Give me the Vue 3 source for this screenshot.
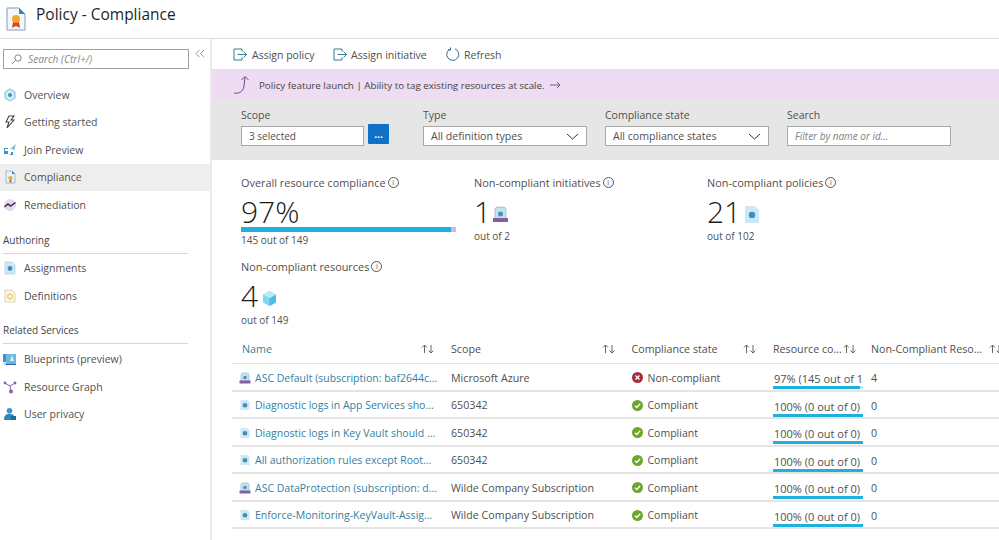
<script setup>
const nav1 = [
  { label: 'Overview', icon: 'overview' },
  { label: 'Getting started', icon: 'bolt' },
  { label: 'Join Preview', icon: 'join' },
  { label: 'Compliance', icon: 'compliance', active: true },
  { label: 'Remediation', icon: 'remed' },
]
const nav2 = [
  { label: 'Assignments', icon: 'assign' },
  { label: 'Definitions', icon: 'defin' },
]
const nav3 = [
  { label: 'Blueprints (preview)', icon: 'blue' },
  { label: 'Resource Graph', icon: 'graph' },
  { label: 'User privacy', icon: 'user' },
]
const groups = [
  { title: '', items: nav1 },
  { title: 'Authoring', items: nav2 },
  { title: 'Related Services', items: nav3 },
]
const rows = [
  { name: 'ASC Default (subscription: baf2644c...', kind: 'init', scope: 'Microsoft Azure', ok: false, res: '97% (145 out of 149)', pct: 97, n: 4 },
  { name: 'Diagnostic logs in App Services sho...', kind: 'pol', scope: '650342', ok: true, res: '100% (0 out of 0)', pct: 100, n: 0 },
  { name: 'Diagnostic logs in Key Vault should ...', kind: 'pol', scope: '650342', ok: true, res: '100% (0 out of 0)', pct: 100, n: 0 },
  { name: 'All authorization rules except Root...', kind: 'pol', scope: '650342', ok: true, res: '100% (0 out of 0)', pct: 100, n: 0 },
  { name: 'ASC DataProtection (subscription: d...', kind: 'init', scope: 'Wilde Company Subscription', ok: true, res: '100% (0 out of 0)', pct: 100, n: 0 },
  { name: 'Enforce-Monitoring-KeyVault-Assig...', kind: 'pol', scope: 'Wilde Company Subscription', ok: true, res: '100% (0 out of 0)', pct: 100, n: 0 },
]
const heads = ['Name', 'Scope', 'Compliance state', 'Resource co...', 'Non-Compliant Reso...']
</script>

<template>
  <div class="page">
    <header class="head">
      <svg class="logo" width="20" height="24" viewBox="0 0 20 24">
        <path d="M1 1h12l6 6v16H1z" fill="#f4f8fb" stroke="#7f9db5" stroke-width="1" />
        <path d="M13 1l6 6h-6z" fill="#2f86c8" />
        <path d="M7 15l-1 6 4-2 4 2-1-6z" fill="#d8452c" />
        <circle cx="10" cy="12" r="4" fill="#f0a92d" />
      </svg>
      <h1 class="title">Policy - Compliance</h1>
    </header>
    <div class="body">
      <aside class="side">
        <div class="searchrow">
          <div class="sbox">
            <svg width="11" height="11" viewBox="0 0 11 11" fill="none" stroke="#777" stroke-width="0.9">
              <circle cx="7" cy="4" r="3.2" /><path d="M4.7 6.3L1 10" />
            </svg>
            <span>Search (Ctrl+/)</span>
          </div>
          <svg class="coll" width="10" height="9" viewBox="0 0 10 9" fill="none" stroke="#8a8a8a" stroke-width="0.9">
            <path d="M4.5 1L1 4.5 4.5 8M9 1L5.5 4.5 9 8" />
          </svg>
        </div>
        <section v-for="g in groups" :key="g.title" class="group">
          <div v-if="g.title" class="gtitle">{{ g.title }}</div>
          <div v-for="it in g.items" :key="it.label" class="nav" :class="{ on: it.active }">
            <svg class="nicon" width="14" height="14" viewBox="0 0 14 14">
              <template v-if="it.icon === 'overview'">
                <path d="M7 1l5 3v6l-5 3-5-3V4z" fill="#d3eef5" stroke="#79bcd0" stroke-width="1" />
                <circle cx="7" cy="7" r="2" fill="#3b93b8" />
              </template>
              <path v-else-if="it.icon === 'bolt'" d="M6 1h5L8 5h3l-7 8 2-6H3z" fill="none" stroke="#444" stroke-width="1.1" />
              <template v-else-if="it.icon === 'join'">
                <path d="M1 5h4v1H2v2h3v3H1z" fill="#3f92c4" />
                <path d="M7 6l6-5-2 7-1-2z" fill="#7fb9dc" />
                <path d="M8 9h2v3H7v-1h1z" fill="#3f92c4" />
              </template>
              <template v-else-if="it.icon === 'compliance'">
                <path d="M3 1h6l3 3v9H3z" fill="#e6f3fa" stroke="#7fb0d0" stroke-width="0.8" />
                <path d="M9 1l3 3H9z" fill="#2f86c8" />
                <circle cx="7.5" cy="8" r="2.1" fill="#eda72e" />
                <path d="M6.5 10h2v2.4h-2z" fill="#d8552c" />
              </template>
              <template v-else-if="it.icon === 'remed'">
                <circle cx="7" cy="7" r="6" fill="#e6d9ee" />
                <path d="M1.5 9l3.5-3 2.5 2 5-3.5" fill="none" stroke="#3a2a4a" stroke-width="1.5" />
              </template>
              <template v-else-if="it.icon === 'assign'">
                <path d="M2 1h7l3 3v9H2z" fill="#cfe8f5" stroke="#a8d2e6" stroke-width="0.7" />
                <circle cx="7" cy="7.5" r="2.4" fill="#3b8fbf" />
              </template>
              <template v-else-if="it.icon === 'defin'">
                <path d="M2 1h7l3 3v9H2z" fill="#fbf5dd" stroke="#d6cda6" stroke-width="0.8" />
                <circle cx="7" cy="7.5" r="2.4" fill="none" stroke="#e0b95a" stroke-width="1" />
              </template>
              <template v-else-if="it.icon === 'blue'">
                <path d="M0 2h3v8H0z" fill="#3b93c8" />
                <path d="M3 2h10v10H3z" fill="#6fb7e0" />
                <path d="M9 3l2 6H7z" fill="#d8eefa" />
                <path d="M0 10l3 2h10v1H3z" fill="#2569a0" />
              </template>
              <template v-else-if="it.icon === 'graph'">
                <path d="M2 3l5 3 5-3M7 6l1 6" stroke="#8661b0" stroke-width="1" fill="none" />
                <circle cx="2" cy="3" r="1.4" fill="#8661b0" />
                <circle cx="12" cy="3" r="1.4" fill="#8661b0" />
                <circle cx="8" cy="11.5" r="2" fill="#8661b0" />
              </template>
              <template v-else>
                <circle cx="6.5" cy="3.8" r="2.8" fill="#3f97c5" />
                <path d="M1 13c0-5 2-6 5.500-6s5.500 1 6 6z" fill="#2f86b8" />
                <rect x="8" y="9" width="5" height="4" fill="#1e6a96" />
              </template>
            </svg>
            <span>{{ it.label }}</span>
          </div>
        </section>
      </aside>
      <main class="main">
        <div class="toolbar">
          <div class="tool t1">
            <svg width="14" height="13" viewBox="0 0 14 13" fill="none" stroke="#2f7f8f" stroke-width="1">
              <path d="M9 3.500V1H1v11h8V9.500" /><path d="M4.500 6.500h9M10.500 3.500l3 3-3 3" />
            </svg>
            <span>Assign policy</span>
          </div>
          <div class="tool t2">
            <svg width="14" height="13" viewBox="0 0 14 13" fill="none" stroke="#2f7f8f" stroke-width="1">
              <path d="M9 3.500V1H1v11h8V9.500" /><path d="M4.500 6.500h9M10.500 3.500l3 3-3 3" />
            </svg>
            <span>Assign initiative</span>
          </div>
          <div class="tool t3">
            <svg width="15" height="15" viewBox="0 0 15 15" fill="none" stroke="#2f6f8f" stroke-width="1">
              <path d="M9 1.800a6 6 0 1 1-4.500 0" /><path d="M4.500 0.500v2.500H2" />
            </svg>
            <span>Refresh</span>
          </div>
        </div>
        <div class="banner">
          <svg width="18" height="20" viewBox="0 0 18 20" fill="none" stroke="#7a3f98" stroke-width="1">
            <path d="M1 18c5 1 9-1 10-7l1-9M8.500 5L12 1.500 15.500 5" />
          </svg>
          <span>Policy feature launch | Ability to tag existing resources at scale.</span>
          <svg width="11" height="8" viewBox="0 0 11 8" fill="none" stroke="#7a3f98" stroke-width="0.9"><path d="M0 4h10M7 1l3 3-3 3" /></svg>
        </div>
        <div class="filters">
          <div class="field f-scope">
            <label>Scope</label>
            <div class="scoperow">
              <div class="ctl scope">3 selected</div>
              <div class="dots">...</div>
            </div>
          </div>
          <div class="field f-sel">
            <label>Type</label>
            <div class="ctl sel">All definition types
              <svg width="13" height="7" viewBox="0 0 13 7" fill="none" stroke="#333" stroke-width="1"><path d="M1 1l5.500 5L12 1" /></svg>
            </div>
          </div>
          <div class="field f-sel">
            <label>Compliance state</label>
            <div class="ctl sel">All compliance states
              <svg width="13" height="7" viewBox="0 0 13 7" fill="none" stroke="#333" stroke-width="1"><path d="M1 1l5.500 5L12 1" /></svg>
            </div>
          </div>
          <div class="field f-sel">
            <label>Search</label>
            <div class="ctl ph">Filter by name or id...</div>
          </div>
        </div>
        <div class="stats">
          <div class="stat">
            <div class="slabel">Overall resource compliance<i class="info">i</i></div>
            <div class="big pct">97%</div>
            <div class="bar"><div class="barfill"></div></div>
            <div class="sub">145 out of 149</div>
          </div>
          <div class="stat">
            <div class="slabel">Non-compliant initiatives<i class="info">i</i></div>
            <div class="bigrow">
              <span class="big">1</span>
              <svg class="initicon" width="17" height="17" viewBox="0 0 17 17">
                <path d="M3 13V4q0-3 3-3h5q3 0 3 3v9z" fill="#c4e3f1" stroke="#8ab6d0" stroke-width="0.7" />
                <circle cx="8.500" cy="8" r="2.500" fill="#4d8fb8" />
                <path d="M1 12h15v4H1z" fill="#8a5aa5" />
              </svg>
            </div>
            <div class="sub">out of 2</div>
          </div>
          <div class="stat">
            <div class="slabel">Non-compliant policies<i class="info">i</i></div>
            <div class="bigrow">
              <span class="big">21</span>
              <svg width="14" height="17" viewBox="0 0 14 17">
                <path d="M0 0h10l4 4v13H0z" fill="#cde8f6" />
                <circle cx="7" cy="9" r="3.200" fill="#3d8fbe" />
              </svg>
            </div>
            <div class="sub">out of 102</div>
          </div>
          <div class="stat res">
            <div class="slabel">Non-compliant resources<i class="info">i</i></div>
            <div class="bigrow">
              <span class="big">4</span>
              <svg width="15" height="15" viewBox="0 0 15 15">
                <path d="M7.500 0L14 3.500v8L7.500 15 1 11.500v-8z" fill="#7fd6f0" />
                <path d="M7.500 7L14 3.500v8L7.500 15z" fill="#4fbde2" />
                <path d="M7.500 7L1 3.500 7.500 0 14 3.500z" fill="#b4ecfa" />
              </svg>
            </div>
            <div class="sub">out of 149</div>
          </div>
        </div>
        <div class="table">
          <div class="tr th">
            <div v-for="(h, i) in heads" :key="h" class="cell" :class="{ link: i === 0 }">
              <span class="hlabel">{{ h }}</span>
              <svg class="sort" width="14" height="10" viewBox="0 0 14 10" fill="none" stroke="#555" stroke-width="0.9">
                <path d="M3.500 9V1M1 3.500L3.500 1 6 3.500M10 1v8M7.500 6.500L10 9l2.500-2.500" />
              </svg>
            </div>
          </div>
          <div v-for="r in rows" :key="r.name" class="tr">
            <div class="cell link namecell">
              <svg v-if="r.kind === 'init'" width="12" height="12" viewBox="0 0 12 12">
                <path d="M2 9V3q0-2 2-2h4q2 0 2 2v6z" fill="#c4e3f1" stroke="#8ab6d0" stroke-width="0.6" />
                <circle cx="6" cy="5.500" r="1.800" fill="#4d8fb8" />
                <path d="M0.500 8.500h11V11.500h-11z" fill="#8a5aa5" />
              </svg>
              <svg v-else width="12" height="12" viewBox="0 0 12 12">
                <path d="M1.500 1h7l2 2v8h-9z" fill="#cde8f6" />
                <circle cx="6" cy="6.300" r="2.300" fill="#3d8fbe" />
              </svg>
              <span class="nm">{{ r.name }}</span>
            </div>
            <div class="cell">{{ r.scope }}</div>
            <div class="cell state">
              <svg width="11" height="11" viewBox="0 0 11 11">
                <template v-if="r.ok">
                  <circle cx="5.500" cy="5.500" r="5.500" fill="#6aa72b" />
                  <path d="M3 5.700l1.800 1.800L8.200 3.800" fill="none" stroke="#fff" stroke-width="1.300" />
                </template>
                <template v-else>
                  <circle cx="5.500" cy="5.500" r="5.500" fill="#a82c3a" />
                  <path d="M3.500 3.500l4 4M7.500 3.500l-4 4" fill="none" stroke="#fff" stroke-width="1.300" />
                </template>
              </svg>
              <span>{{ r.ok ? 'Compliant' : 'Non-compliant' }}</span>
            </div>
            <div class="cell rescell">
              <div class="restext">{{ r.res }}</div>
              <div class="resbar"><div class="resfill" :style="{ width: r.pct + '%' }"></div></div>
            </div>
            <div class="cell num">{{ r.n }}</div>
          </div>
        </div>
      </main>
    </div>
  </div>
</template>

<style>
html, body { margin: 0; background: #fff; overflow: hidden; }
</style>

<style scoped>
.page { width: 999px; height: 540px; overflow: hidden; display: flex; flex-direction: column; font-family: "Open Sans", "Noto Sans", sans-serif; font-size: 10.500px; color: #505050; background: #fff; }
.head { height: 39px; flex: none; box-sizing: border-box; display: flex; align-items: flex-start; border-bottom: 1px solid #dcdcdc; padding: 7px 0 0 6px; }
.logo { flex: none; }
.title { margin: -3px 0 0 10px; font-size: 15.500px; line-height: 20px; font-weight: 400; color: #1f1f1f; }
.body { flex: 1; display: flex; min-height: 0; }
.side { width: 212px; flex: none; box-sizing: border-box; border-right: 2px solid #eaeaea; }
.searchrow { display: flex; padding: 10px 0 0 3px; height: 42px; box-sizing: border-box; align-items: flex-start; }
.sbox { width: 186px; height: 20px; box-sizing: border-box; border: 1px solid #a0a0a0; display: flex; align-items: center; gap: 6px; padding-left: 7px; font-style: italic; color: #8a8a8a; font-size: 10.200px; }
.coll { margin: 0 0 0 6px; }
.nav { height: 27.500px; display: flex; align-items: center; padding-left: 3px; gap: 7px; font-size: 10.500px; color: #505050; }
.nav.on { background: #eeeeee; }
.nicon { flex: none; }
.gtitle { margin: 14px 22px 1px 3px; height: 21px; box-sizing: border-box; border-bottom: 1px solid #d6d6d6; font-size: 10px; color: #444; line-height: 14px; }
.group:last-child .gtitle { margin-top: 13px; margin-bottom: 2px; }
.main { flex: 1; min-width: 0; }
.toolbar { height: 30px; box-sizing: border-box; display: flex; align-items: center; padding: 1px 0 0 21px; }
.tool { display: flex; align-items: center; gap: 5px; }
.t1 { width: 100px; }
.t2 { width: 113px; gap: 4px; }
.t3 { gap: 3px; }
.banner { height: 31px; background: #eedcf3; display: flex; align-items: center; padding-left: 21px; gap: 5px; font-size: 9.750px; color: #444; }
.banner > span { margin: 1px 0 0 3px; }
.filters { height: 60px; background: #e6e6e6; display: flex; padding-left: 29px; padding-top: 8px; box-sizing: border-box; }
.field label { display: block; height: 18px; line-height: 14px; color: #505050; }
.f-scope { width: 182px; }
.f-sel { width: 182px; }
.scoperow { display: flex; gap: 4px; align-items: flex-start; }
.ctl { height: 20px; box-sizing: border-box; border: 1px solid #a8a8a8; background: #fff; display: flex; align-items: center; padding: 0 7px; width: 164px; font-size: 10.600px; }
.scope { width: 123px; font-size: 10px; }
.dots { width: 21px; height: 20px; margin-top: -2px; background: #0f72c6; border-radius: 1px; color: #fff; text-align: center; line-height: 20px; font-weight: 700; font-size: 10px; }
.sel { justify-content: space-between; }
.ph { font-style: italic; color: #808080; font-size: 10px; }
.stats { display: grid; grid-template-columns: 233px 233px 233px; padding: 14px 0 0 29px; height: 177px; box-sizing: border-box; grid-template-rows: 84px auto; }
.res { grid-column: 1; }
.slabel { display: flex; align-items: center; gap: 2px; height: 16px; white-space: pre; font-size: 10.900px; }
.info { display: inline-block; width: 11px; height: 11px; box-sizing: border-box; border: 1px solid #555; border-radius: 50%; font-style: normal; font-size: 7px; line-height: 9px; text-align: center; }
.big { font-size: 30px; line-height: 32px; color: #1c1c1c; font-weight: 300; }
.pct { height: 32px; margin-top: 6px; }
.bigrow { display: flex; align-items: center; gap: 4px; height: 32px; margin-top: 6px; }
.bigrow svg { margin-top: 4px; }
.bigrow .initicon { margin-left: -3px; }
.bar { width: 215px; height: 5px; background: #d9b6c9; margin-top: -1px; }
.barfill { width: 210px; height: 5px; background: #1fb0de; }
.sub { font-size: 10px; line-height: 14px; margin-top: 1px; }
.table { margin-left: 20px; font-size: 10.700px; }
.tr { display: grid; grid-template-columns: 219px 180.500px 141.500px 98px 130px; height: 27.500px; box-sizing: border-box; border-bottom: 2px solid #e4e4e4; align-items: center; }
.th { height: 27px; border-bottom-width: 1px; }
.cell { display: flex; align-items: center; white-space: nowrap; overflow: hidden; min-width: 0; height: 100%; }
.tr:not(.th) .cell { padding-top: 2px; box-sizing: border-box; }
.th .cell { padding: 0 16px 2px 0; box-sizing: border-box; }
.th .cell:nth-child(4) { padding-right: 14px; }
.th .cell:nth-child(5) { padding-right: 0; }
.th .cell:nth-child(5) .hlabel { flex: none; margin-right: 7px; }
.hlabel { flex: 1; min-width: 0; }
.sort { flex: none; }
.th .cell:first-child { padding-left: 10px; font-weight: 500; }
.link { color: #33819f; }
.namecell { padding-left: 7px; gap: 4px; box-sizing: border-box; font-size: 10.500px; }
.nm { overflow: hidden; }
.state { gap: 5px; font-size: 10.500px; }
.tr:not(.th) .rescell { display: block; padding-top: 8px; box-sizing: border-box; width: 90px; font-size: 11px; }
.restext { overflow: hidden; padding-left: 1px; line-height: 14px; }
.resbar { height: 3px; background: #bfe6f2; }
.resfill { height: 3px; background: #1fb0de; }
.tr:not(.th) .num { padding-top: 3px; }
</style>
